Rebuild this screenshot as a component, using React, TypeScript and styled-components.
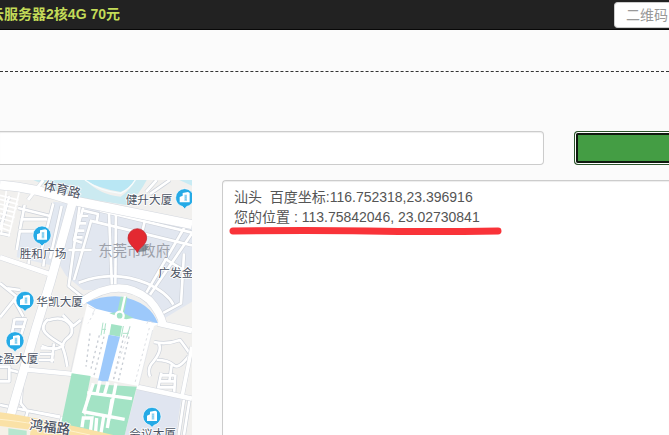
import React from "react";
import styled, { createGlobalStyle } from "styled-components";

const GlobalStyle = createGlobalStyle`
  *, *::before, *::after { box-sizing: border-box; }
  body {
    margin: 0;
    background: #fbfbfb;
    color: #555;
    font: 14px/20px "Liberation Sans", "Noto Sans CJK SC", sans-serif;
  }
`;

const Page = styled.div`
  display: flex;
  flex-direction: column;
  min-height: 100vh;
  overflow: hidden;
`;

const TopBar = styled.header`
  display: flex;
  justify-content: space-between;
  align-items: center;
  height: 30px;
  background: #222;
  border-bottom: 1px solid #080808;
`;

const Promo = styled.a`
  display: flex;
  justify-content: flex-end;
  width: 120px;
  padding-bottom: 2px;
  overflow: hidden;
  white-space: nowrap;
  color: #c3db58;
  text-decoration: none;
  font-weight: bold;
`;

const SearchBox = styled.input`
  width: 55px;
  height: 26px;
  padding: 0 0 0 11px;
  border: 1px solid #ccc;
  border-right: 0;
  border-radius: 4px 0 0 4px;
  background: #fff;
  font: inherit;
  &::placeholder { color: #999; opacity: 1; }
`;

const Divider = styled.hr`
  width: 100%;
  margin: 41px 0 59px;
  border: 0;
  border-top: 1px dashed #333;
`;

const FormRow = styled.form`
  display: grid;
  grid-template-columns: minmax(0, 1fr) 95px;
  gap: 30px;
  margin-bottom: 15px;
`;

const AddressInput = styled.input`
  height: 34px;
  min-width: 0;
  padding: 6px 12px;
  border: 1px solid #ccc;
  border-left: 0;
  border-radius: 0 4px 4px 0;
  background: #fff;
  box-shadow: inset 0 1px 1px rgba(0, 0, 0, 0.075);
  font: inherit;
`;

const SubmitButton = styled.button`
  height: 34px;
  border: 1px solid #2c552c;
  border-right: 0;
  border-radius: 4px 0 0 4px;
  background: #449d44;
  box-shadow: inset 1px 0 #fff, inset 0 1px #fff, inset 0 -1px #fff,
    inset 3px 0 #101a10, inset 0 3px #101a10, inset 0 -3px #101a10;
`;

const Results = styled.main`
  display: grid;
  grid-template-columns: 192px minmax(0, 1fr);
  gap: 30px;
  flex: 1;
`;

const MapPane = styled.div`
  height: 255px;
  overflow: hidden;
  background: #f1f0ee;
`;

const MapDrawing = styled.svg`
  display: block;
  width: 100%;
  height: 100%;
  font-family: "Noto Sans CJK SC", sans-serif;
`;

const OutputPane = styled.div`
  position: relative;
  display: flex;
`;

const Output = styled.textarea`
  flex: 1;
  padding: 6px 11px;
  border: 1px solid #ccc;
  border-width: 1px 0 0 1px;
  border-radius: 4px 0 0 0;
  background: #fff;
  box-shadow: inset 0 1px 1px rgba(0, 0, 0, 0.075);
  color: #555;
  font: inherit;
  resize: none;
  overflow: hidden;
`;

const RedMark = styled.svg`
  position: absolute;
  left: 6px;
  top: 46px;
  width: 276px;
  height: 10px;
  pointer-events: none;
`;

const Halo = styled.text`
  fill: #4b5363;
  stroke: #fff;
  stroke-width: 5px;
  stroke-linejoin: round;
  paint-order: stroke;
`;

function Poi({ x, y }: { x: number; y: number }) {
  return (
    <g transform={`translate(${x} ${y})`}>
      <path
        d="M-27 0a27 27 0 1 1 54 0c0 14-10 24-20 26L0 33l-7-7c-10-2-20-12-20-26Z"
        fill="#25aae6"
        stroke="#fff"
        strokeWidth="2"
      />
      <path d="M-15 14v-16l9-4v-8l16-3 5 3v28Z" fill="#fff" />
      <path d="M-1-9h8V10h-8Z" fill="#a4dbf4" />
      <path d="M1-5h4M1 0h4M1 5h4" stroke="#56bdea" strokeWidth="2" />
    </g>
  );
}

const edgedRoads = [
  "M240 70 206 318 246 350",
  "M274 120 222 300",
  "M326 76 336 322",
  "M348 78 346 322",
  "M556 138 432 350",
  "M552 220 543 370 480 404",
  "M576 160 450 344",
  "M270 122 576 196",
  "M300 92 576 158",
  "M438 108 428 150",
  "M205 210H275",
  "M236 308Q340 268 440 310Q502 338 520 374",
  "M494 236 548 268",
  "M250 92 294 102 290 126",
  "M250 82 222 180 246 188M236 108h28M230 130h28M225 152h28M222 172h26",
  "M144 418Q120 440 136 458T190 496Q165 515 125 498M145 421Q190 405 212 436Q225 460 198 478Q184 492 190 508T202 560",
  "M188 405 220 438 242 420",
  "M122 505h40M120 522h43M116 540h46M162 490 155 548",
  "M462 486Q500 495 540 480Q552 495 576 530M476 490Q488 510 460 545Q440 565 450 590",
  "M470 540Q505 540 520 555T566 528M515 555 508 604",
  "M483 586h40M478 604h46M475 622h48M484 578 472 636M526 584 522 648",
  "M553 650 536 765M570 650 552 765",
  "M68 575 62 670 80 692 180 710M0 675 180 712M84 690 78 712",
  "M176 765 186 710",
  "M0 560h28v44H0M30 570 54 576",
  "M0 310 50 350 0 412M40 356 70 410M22 325 60 330",
  "M44 416 34 470M46 418h34M78 416 64 462M40 440h35",
  "M62 118h80M60 150 50 210M62 154h45M160 70 118 236M185 78 150 236M134 226 130 260M88 234 84 264",
  "M74 75 60 148M54 84 150 108",
  "M470 0 438 36M510 0 450 42M0 160 30 166M28 48 0 150",
];

const wideRoads: { d: string; w: number }[] = [
  { d: "M0 15Q100 22 220 62L576 134", w: 27 },
  { d: "M225 40 150 310 108 445 30 712", w: 26 },
  { d: "M0 232 155 284", w: 14 },
  { d: "M130 0 84 60", w: 9 },
  { d: "M72 568 220 582", w: 13 },
  { d: "M244 365Q360 286 448 360Q480 395 490 434", w: 22 },
  { d: "M474 430 576 452", w: 17 },
  { d: "M410 620 576 656", w: 14 },
  { d: "M576 500 546 650", w: 11 },
];

const parkingBays = [
  "M0 72 50 86M0 86 46 98M0 100 44 112M0 114 40 126M0 128 36 140M0 142 32 154M0 46 56 60M0 58 54 73M20 22 4 160M58 34 26 170",
];

function CityMap() {
  return (
    <MapDrawing
      viewBox="0 0 576 765"
      preserveAspectRatio="xMinYMin slice"
      role="img"
      aria-label="东莞市政府"
    >
      <rect width="576" height="765" fill="#f1f0ee" />
      <path d="M225 55 576 130V365L485 420 400 330H250L165 260Z" fill="#e2e7f0" />
      <path d="M160 65 204 70 150 255 50 232 60 150 135 165Z" fill="#e2e8f1" />
      <path d="M44 416h36l-18 60H34Z" fill="#dfe6f1" />
      <path d="M175 248 150 330 238 354Z" fill="#f2f0ec" />
      <path d="M410 628 544 654 528 765H374Z" fill="#e0e5f0" />
      <path d="M100 0H256Q300 45 362 50Q392 30 405 0H440Q420 40 382 76L210 48Z" fill="#cbeaf1" />
      <path d="M256 0H404Q386 27 362 36Q290 24 256 0Z" fill="#b9e7f4" />
      <path d="M255 0Q300 34 362 40Q390 27 406 0" fill="none" stroke="#f6fcfd" strokeWidth="4" />
      <path d="M538 0H576V17Z" fill="#c8ebf4" />

      <g fill="none" strokeLinejoin="round">
        {edgedRoads.map((d) => (
          <path key={d} d={d} stroke="#cdd2da" strokeWidth="12" />
        ))}
        {edgedRoads.map((d) => (
          <path key={d} d={d} stroke="#fff" strokeWidth="8" />
        ))}
        {parkingBays.map((d) => (
          <path key={d} d={d} stroke="#fff" strokeWidth="5" />
        ))}
        {wideRoads.map(({ d, w }) => (
          <path key={d} d={d} stroke="#d3d7de" strokeWidth={w + 3} />
        ))}
        {wideRoads.map(({ d, w }) => (
          <path key={d} d={d} stroke="#fff" strokeWidth={w} />
        ))}
      </g>

      <path d="M262 370 480 430 462 438 416 618 214 580Z" fill="#fff" />
      <path d="M215 580 272 588 250 700 290 765H176Z" fill="#a3e3c5" />
      <path d="M274 612 410 620 374 765H246Z" fill="#a3e3c5" />
      <path d="M258 368Q310 345 364 350Q450 365 474 430L430 422 380 410 342 400 288 386Z" fill="#9dc9fb" />
      <path d="M362 350H382L372 400 400 414 378 418 328 400 352 396Z" fill="#a3e3c5" />
      <g fill="none" stroke="#fff">
        <path d="M375 348 364 400" strokeWidth="7" />
        <circle cx="359" cy="407" r="12" strokeWidth="7" fill="#a3e3c5" />
        <path d="M326 418 396 434" strokeWidth="10" />
      </g>
      <path d="M334 432 366 438 360 470 328 464Z" fill="#a3e3c5" />
      <path d="M326 464 360 470 324 604H294Z" fill="#9dc9fb" />
      <g fill="none" stroke="#afe3ca" strokeWidth="3">
        <path d="M309 428 303 466M317 430 312 462M370 438 364 470M390 440 380 472M306 448h12M368 460h18" />
      </g>
      <g fill="none" stroke="#c8cdd4" strokeWidth="4" strokeDasharray="7 9">
        <path d="M312 470 282 586M298 466 272 570M372 466 340 600M387 470 354 608M270 460 258 560" />
        <path d="M390 438 340 600M448 444 404 612M281 400 264 430" strokeWidth="2" />
      </g>
      <g fill="none" stroke="#d9dde2" strokeWidth="2">
        <path d="M248 412 212 576M458 450 416 618M265 378 285 388 277 402M440 432 446 422 460 428" />
      </g>
      <g fill="none" stroke="#fff" strokeWidth="10">
        <path d="M300 602 290 646M324 606 312 648M348 610 326 722M280 610 250 700M262 638 396 656M254 696 374 718M336 658 322 744" />
        <path d="M246 742 250 714H276L270 765M312 704 302 765M290 714 286 765" />
      </g>

      <path d="M0 697Q100 710 340 765H0Z" fill="#fae1a6" />
      <path d="M0 718Q90 726 270 765" fill="none" stroke="#fff1cc" strokeWidth="3" />
      <path d="M0 738 92 749 90 765H0Z" fill="#f5f1e8" />
      <path d="M25 745 80 752V765H25Z" fill="#b7e6cf" />

      <Poi x={126} y={165} />
      <Poi x={75} y={361} />
      <Poi x={45} y={482} />
      <Poi x={456} y={709} />
      <Poi x={554} y={53} />

      <text x="295" y="229" fontSize="43" fill="#9da1aa">东莞市政府</text>
      <path d="M414 216 430 194 448 198 436 214Z" fill="#66727b" opacity=".75" />
      <path
        d="M412 218C407 204 384 194 384 174A28 28 0 0 1 440 174C440 194 417 204 412 218Z"
        fill="#e32931"
        stroke="#ba1e26"
        strokeWidth="2"
      />

      <Halo x="128" y="29" fontSize="38" transform="rotate(13 128 29)">体育路</Halo>
      <Halo x="377" y="72" fontSize="35">健升大厦</Halo>
      <Halo x="59" y="235" fontSize="35">胜和广场</Halo>
      <Halo x="475" y="292" fontSize="35">广发金</Halo>
      <Halo x="109" y="379" fontSize="35">华凯大厦</Halo>
      <Halo x="-25" y="549" fontSize="35">金盈大厦</Halo>
      <Halo x="388" y="773" fontSize="35">会议大厦</Halo>
      <Halo x="87" y="748" fontSize="41" fontWeight="500" transform="rotate(7 87 748)">鸿福路</Halo>
    </MapDrawing>
  );
}

const result = "汕头  百度坐标:116.752318,23.396916\n您的位置 : 113.75842046, 23.02730841";

export default function App() {
  return (
    <>
      <GlobalStyle />
      <Page>
        <TopBar>
          <Promo href="#">云服务器2核4G 70元</Promo>
          <SearchBox type="text" placeholder="二维码" aria-label="二维码" />
        </TopBar>
        <Divider />
        <FormRow onSubmit={(event) => event.preventDefault()}>
          <AddressInput type="text" aria-label="地址" />
          <SubmitButton type="submit" aria-label="查询" />
        </FormRow>
        <Results>
          <MapPane>
            <CityMap />
          </MapPane>
          <OutputPane>
            <Output aria-label="坐标" defaultValue={result} spellCheck={false} />
            <RedMark viewBox="0 0 276 10" aria-hidden="true">
              <path
                d="M5 5Q80 4 140 5T270 5"
                fill="none"
                stroke="#f93339"
                strokeWidth="7"
                strokeLinecap="round"
              />
            </RedMark>
          </OutputPane>
        </Results>
      </Page>
    </>
  );
}
